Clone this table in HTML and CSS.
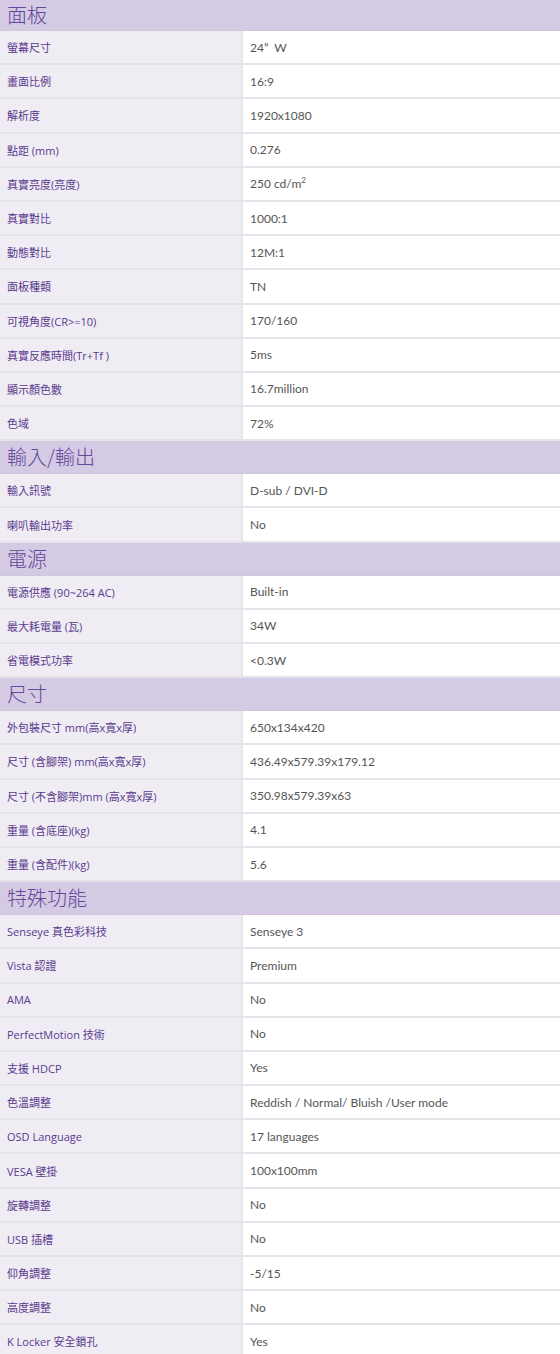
FILE: index.html
```html
<!DOCTYPE html>
<html lang="zh-Hant">
<head>
<meta charset="utf-8">
<title>規格</title>
<link rel="stylesheet" href="styles.css">
</head>
<body>
<div class="spec">
  <div class="head">面板</div>
  <div class="row"><div class="k">螢幕尺寸</div><div class="v">24”&nbsp; W</div></div>
  <div class="row"><div class="k">畫面比例</div><div class="v">16:9</div></div>
  <div class="row"><div class="k">解析度</div><div class="v">1920x1080</div></div>
  <div class="row"><div class="k">點距 (mm)</div><div class="v">0.276</div></div>
  <div class="row"><div class="k">真實亮度(亮度)</div><div class="v">250 cd/m<sup>2</sup></div></div>
  <div class="row"><div class="k">真實對比</div><div class="v">1000:1</div></div>
  <div class="row"><div class="k">動態對比</div><div class="v">12M:1</div></div>
  <div class="row"><div class="k">面板種類</div><div class="v">TN</div></div>
  <div class="row"><div class="k">可視角度(CR&gt;=10)</div><div class="v">170/160</div></div>
  <div class="row"><div class="k">真實反應時間(Tr+Tf )</div><div class="v">5ms</div></div>
  <div class="row"><div class="k">顯示顏色數</div><div class="v">16.7million</div></div>
  <div class="row"><div class="k">色域</div><div class="v">72%</div></div>

  <div class="head">輸入/輸出</div>
  <div class="row"><div class="k">輸入訊號</div><div class="v">D-sub / DVI-D</div></div>
  <div class="row"><div class="k">喇叭輸出功率</div><div class="v">No</div></div>

  <div class="head">電源</div>
  <div class="row"><div class="k">電源供應 (90~264 AC)</div><div class="v">Built-in</div></div>
  <div class="row"><div class="k">最大耗電量 (瓦)</div><div class="v">34W</div></div>
  <div class="row"><div class="k">省電模式功率</div><div class="v">&lt;0.3W</div></div>

  <div class="head">尺寸</div>
  <div class="row"><div class="k">外包裝尺寸 mm(高x寬x厚)</div><div class="v">650x134x420</div></div>
  <div class="row"><div class="k">尺寸 (含腳架) mm(高x寬x厚)</div><div class="v">436.49x579.39x179.12</div></div>
  <div class="row"><div class="k">尺寸 (不含腳架)mm (高x寬x厚)</div><div class="v">350.98x579.39x63</div></div>
  <div class="row"><div class="k">重量 (含底座)(kg)</div><div class="v">4.1</div></div>
  <div class="row"><div class="k">重量 (含配件)(kg)</div><div class="v">5.6</div></div>

  <div class="head">特殊功能</div>
  <div class="row"><div class="k">Senseye 真色彩科技</div><div class="v">Senseye 3</div></div>
  <div class="row"><div class="k">Vista 認證</div><div class="v">Premium</div></div>
  <div class="row"><div class="k">AMA</div><div class="v">No</div></div>
  <div class="row"><div class="k">PerfectMotion 技術</div><div class="v">No</div></div>
  <div class="row"><div class="k">支援 HDCP</div><div class="v">Yes</div></div>
  <div class="row"><div class="k">色溫調整</div><div class="v">Reddish / Normal/ Bluish /User mode</div></div>
  <div class="row"><div class="k">OSD Language</div><div class="v">17 languages</div></div>
  <div class="row"><div class="k">VESA 壁掛</div><div class="v">100x100mm</div></div>
  <div class="row"><div class="k">旋轉調整</div><div class="v">No</div></div>
  <div class="row"><div class="k">USB 插槽</div><div class="v">No</div></div>
  <div class="row"><div class="k">仰角調整</div><div class="v">-5/15</div></div>
  <div class="row"><div class="k">高度調整</div><div class="v">No</div></div>
  <div class="row"><div class="k">K Locker 安全鎖孔</div><div class="v">Yes</div></div>
</div>
</body>
</html>
```
FILE: styles.css
```css
html, body {
  margin: 0;
  padding: 0;
  background: #ffffff;
}
.spec {
  width: 560px;
  font-family: "Lato", "Noto Sans CJK TC", sans-serif;
}
.head {
  height: 33px;
  box-sizing: border-box;
  background: #d4cae4;
  color: #62479a;
  font-size: 20px;
  line-height: 31px;
  padding-left: 7px;
  font-family: "Noto Sans CJK TC", sans-serif;
  font-weight: 300;
  border-bottom: 1px solid #cfc5df;
}
.head:first-child {
  height: 31px;
  line-height: 29px;
}
.row {
  display: grid;
  grid-template-columns: 243px 1fr;
  height: 34.2px;
  box-sizing: border-box;
  border-bottom: 2px solid #e5e2ea;
}
.k {
  background: #efecf4;
  color: #5a3a8e;
  font-family: "Open Sans", "Noto Sans CJK TC", sans-serif;
  font-size: 11px;
  padding-left: 7px;
  display: flex;
  align-items: center;
  border-right: 2px solid #e6e4ec;
}
.v {
  background: #ffffff;
  color: #555555;
  font-size: 12px;
  padding-left: 7px;
  display: flex;
  align-items: center;
}
.v sup {
  font-size: 8px;
  line-height: 0;
  position: relative;
  top: -4px;
  vertical-align: baseline;
}
```
